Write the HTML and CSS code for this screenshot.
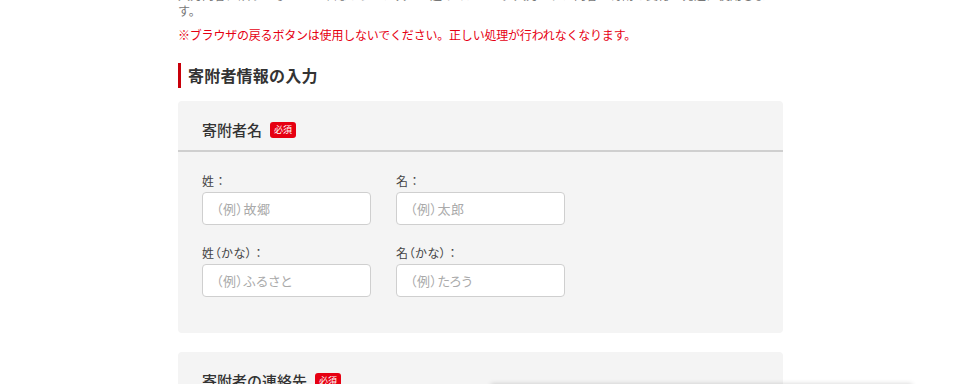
FILE: index.html
```html
<!DOCTYPE html>
<html lang="ja">
<head>
<meta charset="utf-8">
<link rel="stylesheet" href="styles.css">
</head>
<body>
<main class="page">
  <p class="lead">入力内容に誤りがないかご確認のうえ、次へお進みください。入力された内容は寄附の受付・発送に使用しま<br>す。</p>
  <p class="warn">※ブラウザの戻るボタンは使用しないでください。正しい処理が行われなくなります。</p>
  <h2 class="section-title">寄附者情報の入力</h2>

  <section class="panel">
    <div class="panel-head">
      <h3 class="panel-title">寄附者名</h3>
      <span class="badge">必須</span>
    </div>
    <div class="fields">
      <label class="field">
        <span class="field-label">姓<span class="colon">：</span></span>
        <input class="input" type="text" placeholder="（例）故郷">
      </label>
      <label class="field">
        <span class="field-label">名<span class="colon">：</span></span>
        <input class="input" type="text" placeholder="（例）太郎">
      </label>
      <label class="field">
        <span class="field-label">姓（かな）<span class="colon">：</span></span>
        <input class="input" type="text" placeholder="（例）ふるさと">
      </label>
      <label class="field">
        <span class="field-label">名（かな）<span class="colon">：</span></span>
        <input class="input" type="text" placeholder="（例）たろう">
      </label>
    </div>
  </section>

  <section class="panel">
    <div class="panel-head">
      <h3 class="panel-title">寄附者の連絡先</h3>
      <span class="badge">必須</span>
    </div>
    <div class="fields">
      <label class="field">
        <span class="field-label">電話番号<span class="colon">：</span></span>
        <input class="input" type="text" placeholder="（例）0312345678">
      </label>
    </div>
  </section>
</main>
<div class="floating-bar"></div>
</body>
</html>
```

FILE: styles.css
```css
* { box-sizing: border-box; }
html, body { margin: 0; padding: 0; }
body {
  background: #fff;
  color: #333;
  font-family: "Noto Sans CJK JP", "Noto Sans", sans-serif;
  overflow: hidden;
  height: 384px;
  position: relative;
}
.page {
  width: 605px;
  margin: -13px 0 0 178px;
}
.lead {
  margin: 0;
  font-size: 12px;
  line-height: 16px;
  color: #777;
  white-space: nowrap;
  overflow: hidden;
}
.warn {
  margin: 6px 0 0;
  font-size: 12px;
  line-height: 19px;
  color: #e60012;
  letter-spacing: -0.2px;
}
.section-title {
  margin: 19px 0 0;
  border-left: 3px solid #c8000a;
  padding-left: 7px;
  font-size: 16px;
  font-weight: 700;
  line-height: 25px;
  color: #333;
  letter-spacing: 0.2px;
}
.panel {
  margin-top: 13px;
  background: #f4f4f4;
  border-radius: 4px;
  padding-bottom: 36px;
}
.panel + .panel { margin-top: 19px; }
.panel-head {
  display: flex;
  align-items: center;
  gap: 8px;
  padding: 20px 24px 12px;
  border-bottom: 2px solid #cfcfcf;
}
.panel-title {
  margin: 0;
  font-size: 15px;
  font-weight: 500;
  line-height: 17px;
  color: #333;
}
.badge {
  display: inline-block;
  background: #e60012;
  color: #fff;
  font-size: 9px;
  line-height: 16px;
  padding: 0 4px;
  border-radius: 3px;
}
.fields {
  display: grid;
  grid-template-columns: 169px 169px;
  column-gap: 25px;
  row-gap: 19px;
  padding: 20px 24px 0;
}
.field {
  display: flex;
  flex-direction: column;
  gap: 2px;
}
.field-label {
  font-size: 12px;
  line-height: 18px;
  color: #444;
  font-feature-settings: "palt";
  letter-spacing: 0.6px;
}
.colon {
  font-feature-settings: normal;
  letter-spacing: 0;
}
.input {
  width: 169px;
  height: 33px;
  border: 1px solid #cfcfcf;
  border-radius: 4px;
  background: #fff;
  padding: 0 13px;
  font-family: inherit;
  font-size: 13px;
  color: #333;
  font-feature-settings: "palt";
  letter-spacing: 0.5px;
}
.input::placeholder { color: #aaa; }
.floating-bar {
  position: absolute;
  left: 491px;
  top: 384px;
  width: 421px;
  height: 40px;
  background: #fff;
  box-shadow: 0 0 5px rgba(0,0,0,0.18);
}
```
